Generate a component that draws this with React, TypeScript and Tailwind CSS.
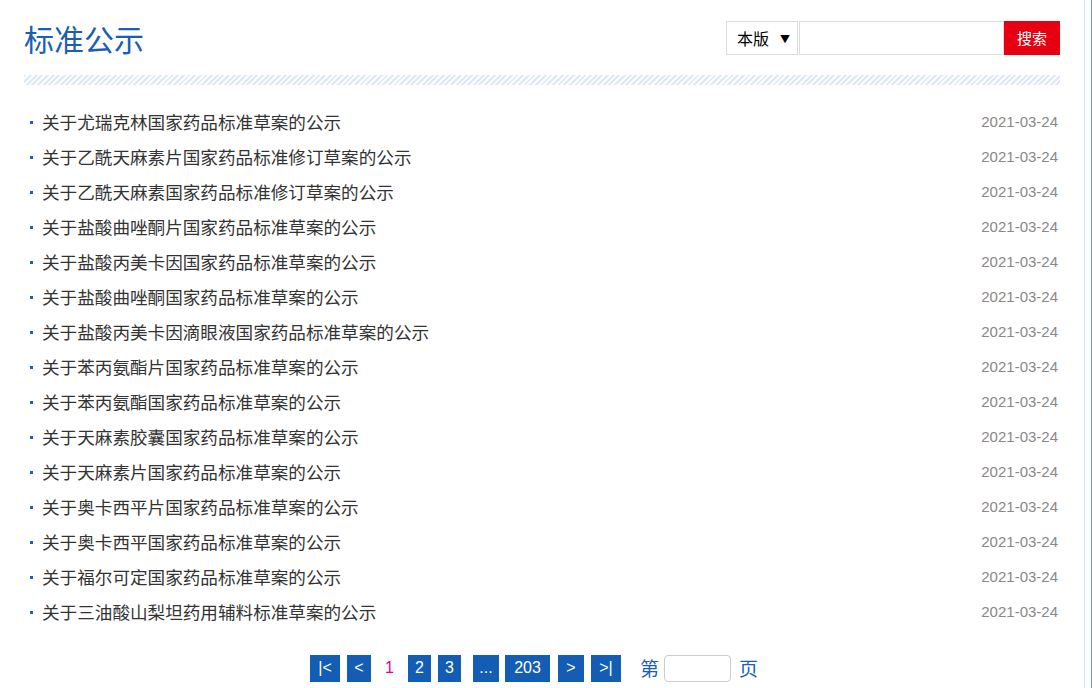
import React from 'react'

const items = [
  '关于尤瑞克林国家药品标准草案的公示',
  '关于乙酰天麻素片国家药品标准修订草案的公示',
  '关于乙酰天麻素国家药品标准修订草案的公示',
  '关于盐酸曲唑酮片国家药品标准草案的公示',
  '关于盐酸丙美卡因国家药品标准草案的公示',
  '关于盐酸曲唑酮国家药品标准草案的公示',
  '关于盐酸丙美卡因滴眼液国家药品标准草案的公示',
  '关于苯丙氨酯片国家药品标准草案的公示',
  '关于苯丙氨酯国家药品标准草案的公示',
  '关于天麻素胶囊国家药品标准草案的公示',
  '关于天麻素片国家药品标准草案的公示',
  '关于奥卡西平片国家药品标准草案的公示',
  '关于奥卡西平国家药品标准草案的公示',
  '关于福尔可定国家药品标准草案的公示',
  '关于三油酸山梨坦药用辅料标准草案的公示',
]

const cjk = { fontFamily: '"Noto Sans CJK SC", "Noto Sans", sans-serif' }
const latin = { fontFamily: '"Liberation Sans", Arial, sans-serif' }

function PageBtn({ label, w, extra = '' }: { label: string; w: string; extra?: string }) {
  return (
    <span
      className={`flex items-center justify-center h-[27px] ${w} ${extra} bg-[#135db5] text-white text-[16px]`}
      style={latin}
    >
      {label}
    </span>
  )
}

export default function App() {
  return (
    <div className="flex h-[688px] bg-white" style={cjk}>
      <div className="w-[1085px] shrink-0 border-r border-[#cfe3f7] pl-6 pr-6">
        {/* Header */}
        <div className="mt-[21px] flex h-[34px] items-center justify-between">
          <h1 className="text-[30px] leading-none text-[#1c5db5]">标准公示</h1>
          <div className="flex h-[34px]">
            <div className="flex w-[72px] items-center justify-between border border-[#dcdcdc] pl-[10px] pr-[7px] text-[16px] text-black">
              <span>本版</span>
              <span className="text-[10px]">▼</span>
            </div>
            <div className="ml-px w-[205px] border border-[#dcdcdc]" />
            <button className="w-[56px] bg-[#e60012] text-[15px] text-white">搜索</button>
          </div>
        </div>

        {/* Striped divider */}
        <div className="mt-[20px] h-[10px] bg-[repeating-linear-gradient(135deg,#dde9f8_0px,#dde9f8_2px,#ffffff_2px,#ffffff_4px)]" />

        {/* List */}
        <ul className="mt-[20px]">
          {items.map((t) => (
            <li key={t} className="flex h-[35px] items-center justify-between">
              <div className="flex items-center">
                <span className="ml-[6px] mr-[9px] h-[3px] w-[3px] bg-[#1e5fb0]" />
                <span className="-mt-[2px] text-[17.6px] leading-none text-[#333333]">{t}</span>
              </div>
              <span className="pr-[2px] text-[15px] text-[#888888]" style={latin}>
                2021-03-24
              </span>
            </li>
          ))}
        </ul>

        {/* Pagination */}
        <div className="mt-[24px] flex items-center justify-center pr-[16px]">
          <div className="flex items-center gap-[7px]">
            <PageBtn label="|<" w="w-[30px]" />
            <PageBtn label="<" w="w-[24px]" />
            <span className="w-[23px] text-center text-[16px] text-[#e4007f]" style={latin}>1</span>
            <PageBtn label="2" w="w-[23px]" />
            <PageBtn label="3" w="w-[23px]" />
            <PageBtn label="..." w="w-[26px]" extra="ml-[5px]" />
            <PageBtn label="203" w="w-[45px]" extra="-ml-px" />
            <PageBtn label=">" w="w-[26px]" extra="ml-px" />
            <PageBtn label=">|" w="w-[30px]" />
          </div>
          <span className="ml-[19px] text-[19px] text-[#1c5db5]">第</span>
          <div className="ml-[5px] h-[27px] w-[67px] rounded-[4px] border border-[#cccccc]" />
          <span className="ml-[8px] text-[19px] text-[#1c5db5]">页</span>
        </div>
      </div>
      <div className="w-[6px] shrink-0" />
      <div className="w-px shrink-0 bg-[#6a9bd6]" />
    </div>
  )
}
